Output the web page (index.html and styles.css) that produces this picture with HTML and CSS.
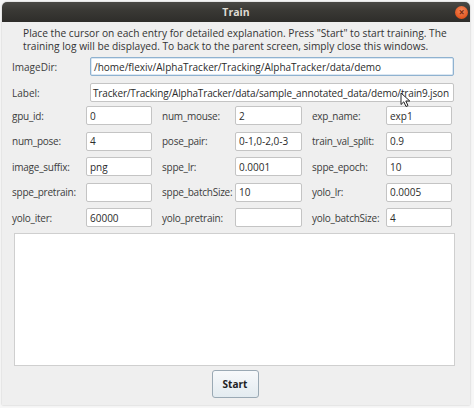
FILE: index.html
```html
<!DOCTYPE html>
<html>
<head>
<meta charset="utf-8">
<link rel="stylesheet" href="styles.css">
</head>
<body>
<div class="window">
  <div class="titlebar">
    <span class="title">Train</span>
    <span class="close">×</span>
  </div>
  <div class="content">
    <p class="desc">Place the cursor on each entry for detailed explanation. Press "Start" to start training. The<br>training log will be displayed. To back to the parent screen, simply close this windows.</p>
    <div class="pathrow">
      <span class="plabel">ImageDir:</span>
      <div class="entry wide focus"><span>/home/flexiv/AlphaTracker/Tracking/AlphaTracker/data/demo</span></div>
    </div>
    <div class="pathrow">
      <span class="plabel">Label:</span>
      <div class="entry wide tight"><span>Tracker/Tracking/AlphaTracker/data/sample_annotated_data/demo/train9.json</span></div>
    </div>
    <div class="grid">
      <span class="lbl">gpu_id:</span><div class="entry">0</div>
      <span class="lbl pad">num_mouse:</span><div class="entry">2</div>
      <span class="lbl pad">exp_name:</span><div class="entry">exp1</div>

      <span class="lbl">num_pose:</span><div class="entry">4</div>
      <span class="lbl pad">pose_pair:</span><div class="entry">0-1,0-2,0-3</div>
      <span class="lbl pad">train_val_split:</span><div class="entry">0.9</div>

      <span class="lbl">image_suffix:</span><div class="entry">png</div>
      <span class="lbl pad">sppe_lr:</span><div class="entry">0.0001</div>
      <span class="lbl pad">sppe_epoch:</span><div class="entry">10</div>

      <span class="lbl">sppe_pretrain:</span><div class="entry"></div>
      <span class="lbl pad">sppe_batchSize:</span><div class="entry">10</div>
      <span class="lbl pad">yolo_lr:</span><div class="entry">0.0005</div>

      <span class="lbl">yolo_iter:</span><div class="entry">60000</div>
      <span class="lbl pad">yolo_pretrain:</span><div class="entry"></div>
      <span class="lbl pad">yolo_batchSize:</span><div class="entry">4</div>
    </div>
    <div class="log"></div>
    <div class="btnrow"><button class="start">Start</button></div>
  </div>
  <svg class="cursor" width="12" height="16" viewBox="0 0 12 16"><path d="M1 1 L1 12.5 L3.8 9.8 L6 14.5 L8 13.6 L5.8 9 L9.8 9 Z" fill="#fff" stroke="#222" stroke-width="1" stroke-linejoin="round"/></svg>
</div>
</body>
</html>
```

FILE: styles.css
```css
* { box-sizing: border-box; }
html, body { margin: 0; padding: 0; }
body {
  background: #f7f7f7;
  width: 474px;
  height: 408px;
  overflow: hidden;
  font-family: "Open Sans", "DejaVu Sans", sans-serif;
  font-size: 10px;
  color: #3c3c3c;
}
.window {
  position: relative;
  margin: 2px 4px 0 2px;
  width: 468px;
  height: 403px;
  background: #efefef;
  border-radius: 5px 5px 0 0;
  box-shadow: 0 0 2px rgba(0,0,0,0.25);
  display: flex;
  flex-direction: column;
}
.titlebar {
  height: 20px;
  flex: none;
  border-radius: 5px 5px 0 0;
  background: linear-gradient(#4a4945, #3a3935 40%, #2e2d2a);
  display: flex;
  align-items: center;
  justify-content: center;
  position: relative;
}
.title {
  color: #dfdbd2;
  font-weight: bold;
  font-size: 10.5px;
}
.close {
  position: absolute;
  right: 2px;
  top: 4px;
  width: 13px;
  height: 13px;
  border-radius: 50%;
  background: radial-gradient(circle at 50% 35%, #f58a5e, #e2561f 70%, #c9471a);
  color: #7a2a0e;
  font-size: 10px;
  line-height: 12px;
  text-align: center;
  font-weight: bold;
}
.content {
  flex: 1;
  display: flex;
  flex-direction: column;
  padding: 5px 0 0 8px;
}
.desc {
  margin: 0 0 4px 13px;
  font-size: 10.2px;
  line-height: 13px;
  white-space: nowrap;
  color: #333;
}
.pathrow {
  display: flex;
  align-items: center;
  height: 19px;
  margin-bottom: 7px;
}
.plabel {
  width: 80px;
  padding-left: 2px;
}
.entry {
  height: 19px;
  background: #fff;
  border: 1px solid #c4c4c4;
  border-radius: 2px;
  display: flex;
  align-items: center;
  padding: 0 3px;
  color: #2b2b2b;
  overflow: hidden;
  white-space: nowrap;
}
.entry.wide { width: 364px; }
.entry.tight { letter-spacing: -0.15px; padding-left: 2px; }
.entry.focus { border-color: #8fb2d0; box-shadow: inset 0 0 0 0.5px #b8d0e6; }
.grid {
  display: grid;
  grid-template-columns: 74px 66px 83px 67px 84px 66px;
  grid-auto-rows: 19px;
  row-gap: 6.5px;
  margin-top: -3px;
  margin-left: 2px;
  align-items: center;
}
.lbl { white-space: nowrap; letter-spacing: -0.25px; }
.lbl.pad { padding-left: 10px; }
.log {
  margin: 6px 0 0 4px;
  width: 441px;
  height: 133px;
  background: #fff;
  border: 1px solid #cfcfcf;
}
.btnrow {
  display: flex;
  justify-content: center;
  padding-top: 4px;
  padding-right: 10px;
}
.start {
  width: 47px;
  height: 28px;
  border: 1px solid #9aa9b4;
  border-radius: 3px;
  background: linear-gradient(#f7f9fb, #e3ebf0);
  font-family: "Open Sans", "DejaVu Sans", sans-serif;
  font-weight: bold;
  font-size: 10px;
  color: #222;
  padding: 0;
}
.cursor {
  position: absolute;
  left: 398px;
  top: 90px;
}
```
